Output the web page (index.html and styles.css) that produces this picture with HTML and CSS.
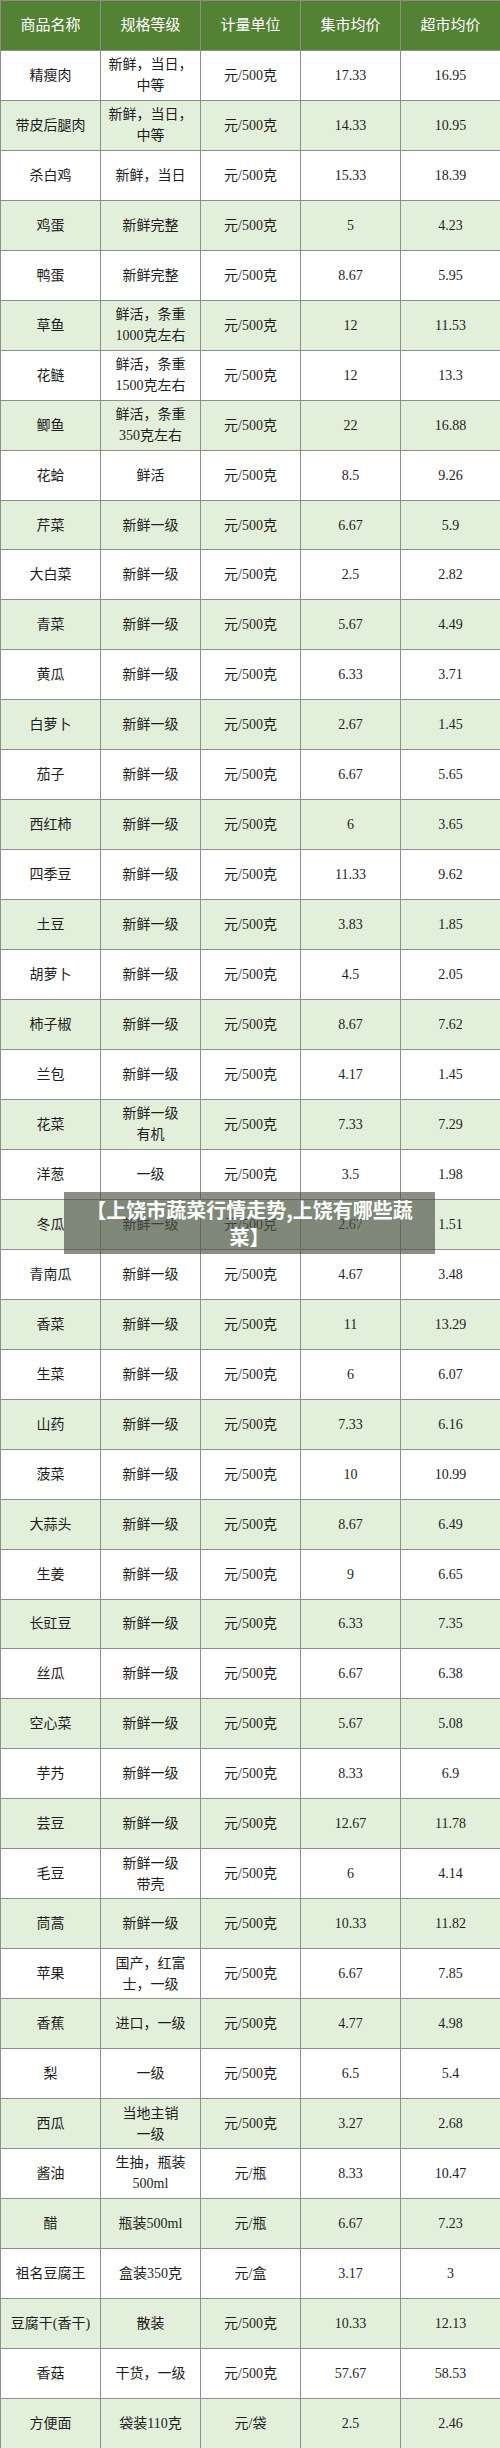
FILE: index.html
```html
<!DOCTYPE html>
<html lang="zh-CN">
<head>
<meta charset="utf-8">
<title>上饶市蔬菜行情走势</title>
<link rel="stylesheet" href="styles.css">
</head>
<body>
<div class="page">
<table class="prices">
<thead>
<tr><th>商品名称</th><th>规格等级</th><th>计量单位</th><th>集市均价</th><th>超市均价</th></tr>
</thead>
<tbody>
<tr><td>精瘦肉</td><td>新鲜，当日，<br>中等</td><td>元/500克</td><td>17.33</td><td>16.95</td></tr>
<tr><td>带皮后腿肉</td><td>新鲜，当日，<br>中等</td><td>元/500克</td><td>14.33</td><td>10.95</td></tr>
<tr><td>杀白鸡</td><td>新鲜，当日</td><td>元/500克</td><td>15.33</td><td>18.39</td></tr>
<tr><td>鸡蛋</td><td>新鲜完整</td><td>元/500克</td><td>5</td><td>4.23</td></tr>
<tr><td>鸭蛋</td><td>新鲜完整</td><td>元/500克</td><td>8.67</td><td>5.95</td></tr>
<tr><td>草鱼</td><td>鲜活，条重<br>1000克左右</td><td>元/500克</td><td>12</td><td>11.53</td></tr>
<tr><td>花鲢</td><td>鲜活，条重<br>1500克左右</td><td>元/500克</td><td>12</td><td>13.3</td></tr>
<tr><td>鲫鱼</td><td>鲜活，条重<br>350克左右</td><td>元/500克</td><td>22</td><td>16.88</td></tr>
<tr><td>花蛤</td><td>鲜活</td><td>元/500克</td><td>8.5</td><td>9.26</td></tr>
<tr><td>芹菜</td><td>新鲜一级</td><td>元/500克</td><td>6.67</td><td>5.9</td></tr>
<tr><td>大白菜</td><td>新鲜一级</td><td>元/500克</td><td>2.5</td><td>2.82</td></tr>
<tr><td>青菜</td><td>新鲜一级</td><td>元/500克</td><td>5.67</td><td>4.49</td></tr>
<tr><td>黄瓜</td><td>新鲜一级</td><td>元/500克</td><td>6.33</td><td>3.71</td></tr>
<tr><td>白萝卜</td><td>新鲜一级</td><td>元/500克</td><td>2.67</td><td>1.45</td></tr>
<tr><td>茄子</td><td>新鲜一级</td><td>元/500克</td><td>6.67</td><td>5.65</td></tr>
<tr><td>西红柿</td><td>新鲜一级</td><td>元/500克</td><td>6</td><td>3.65</td></tr>
<tr><td>四季豆</td><td>新鲜一级</td><td>元/500克</td><td>11.33</td><td>9.62</td></tr>
<tr><td>土豆</td><td>新鲜一级</td><td>元/500克</td><td>3.83</td><td>1.85</td></tr>
<tr><td>胡萝卜</td><td>新鲜一级</td><td>元/500克</td><td>4.5</td><td>2.05</td></tr>
<tr><td>柿子椒</td><td>新鲜一级</td><td>元/500克</td><td>8.67</td><td>7.62</td></tr>
<tr><td>兰包</td><td>新鲜一级</td><td>元/500克</td><td>4.17</td><td>1.45</td></tr>
<tr><td>花菜</td><td>新鲜一级<br>有机</td><td>元/500克</td><td>7.33</td><td>7.29</td></tr>
<tr><td>洋葱</td><td>一级</td><td>元/500克</td><td>3.5</td><td>1.98</td></tr>
<tr><td>冬瓜</td><td>新鲜一级</td><td>元/500克</td><td>2.67</td><td>1.51</td></tr>
<tr><td>青南瓜</td><td>新鲜一级</td><td>元/500克</td><td>4.67</td><td>3.48</td></tr>
<tr><td>香菜</td><td>新鲜一级</td><td>元/500克</td><td>11</td><td>13.29</td></tr>
<tr><td>生菜</td><td>新鲜一级</td><td>元/500克</td><td>6</td><td>6.07</td></tr>
<tr><td>山药</td><td>新鲜一级</td><td>元/500克</td><td>7.33</td><td>6.16</td></tr>
<tr><td>菠菜</td><td>新鲜一级</td><td>元/500克</td><td>10</td><td>10.99</td></tr>
<tr><td>大蒜头</td><td>新鲜一级</td><td>元/500克</td><td>8.67</td><td>6.49</td></tr>
<tr><td>生姜</td><td>新鲜一级</td><td>元/500克</td><td>9</td><td>6.65</td></tr>
<tr><td>长豇豆</td><td>新鲜一级</td><td>元/500克</td><td>6.33</td><td>7.35</td></tr>
<tr><td>丝瓜</td><td>新鲜一级</td><td>元/500克</td><td>6.67</td><td>6.38</td></tr>
<tr><td>空心菜</td><td>新鲜一级</td><td>元/500克</td><td>5.67</td><td>5.08</td></tr>
<tr><td>芋艿</td><td>新鲜一级</td><td>元/500克</td><td>8.33</td><td>6.9</td></tr>
<tr><td>芸豆</td><td>新鲜一级</td><td>元/500克</td><td>12.67</td><td>11.78</td></tr>
<tr><td>毛豆</td><td>新鲜一级<br>带壳</td><td>元/500克</td><td>6</td><td>4.14</td></tr>
<tr><td>茼蒿</td><td>新鲜一级</td><td>元/500克</td><td>10.33</td><td>11.82</td></tr>
<tr><td>苹果</td><td>国产，红富<br>士，一级</td><td>元/500克</td><td>6.67</td><td>7.85</td></tr>
<tr><td>香蕉</td><td>进口，一级</td><td>元/500克</td><td>4.77</td><td>4.98</td></tr>
<tr><td>梨</td><td>一级</td><td>元/500克</td><td>6.5</td><td>5.4</td></tr>
<tr><td>西瓜</td><td>当地主销<br>一级</td><td>元/500克</td><td>3.27</td><td>2.68</td></tr>
<tr><td>酱油</td><td>生抽，瓶装<br>500ml</td><td>元/瓶</td><td>8.33</td><td>10.47</td></tr>
<tr><td>醋</td><td>瓶装500ml</td><td>元/瓶</td><td>6.67</td><td>7.23</td></tr>
<tr><td>祖名豆腐王</td><td>盒装350克</td><td>元/盒</td><td>3.17</td><td>3</td></tr>
<tr><td>豆腐干(香干)</td><td>散装</td><td>元/500克</td><td>10.33</td><td>12.13</td></tr>
<tr><td>香菇</td><td>干货，一级</td><td>元/500克</td><td>57.67</td><td>58.53</td></tr>
<tr><td>方便面</td><td>袋装110克</td><td>元/袋</td><td>2.5</td><td>2.46</td></tr>
</tbody>
</table>
<div class="caption">【上饶市蔬菜行情走势,上饶有哪些蔬菜】</div>
</div>
</body>
</html>
```

FILE: styles.css
```css
html, body {
  margin: 0;
  padding: 0;
  background: #ffffff;
}

.page {
  position: relative;
  width: 500px;
}

.prices {
  width: 500px;
  border-collapse: collapse;
  table-layout: fixed;
  font-family: "Liberation Serif", "Noto Sans CJK SC", serif;
  font-size: 14px;
  line-height: 21px;
  color: #1e1e1e;
}

.prices th,
.prices td {
  width: 100px;
  height: 49.96px;
  padding: 0 2px;
  box-sizing: border-box;
  border: 1px solid #8e8e8e;
  text-align: center;
  vertical-align: middle;
}

.prices th {
  background: #548235;
  color: #ffffff;
  font-weight: normal;
  font-size: 15px;
}

.prices tbody tr:nth-child(even) td {
  background: #e2efda;
}

.caption {
  position: absolute;
  left: 64px;
  top: 1192px;
  width: 371px;
  height: 62px;
  box-sizing: border-box;
  padding: 4px 18px 0;
  background: rgba(78, 84, 72, 0.66);
  color: #ffffff;
  font-family: "Noto Sans CJK SC", sans-serif;
  font-weight: bold;
  font-size: 20px;
  line-height: 27px;
  text-align: center;
}
```
